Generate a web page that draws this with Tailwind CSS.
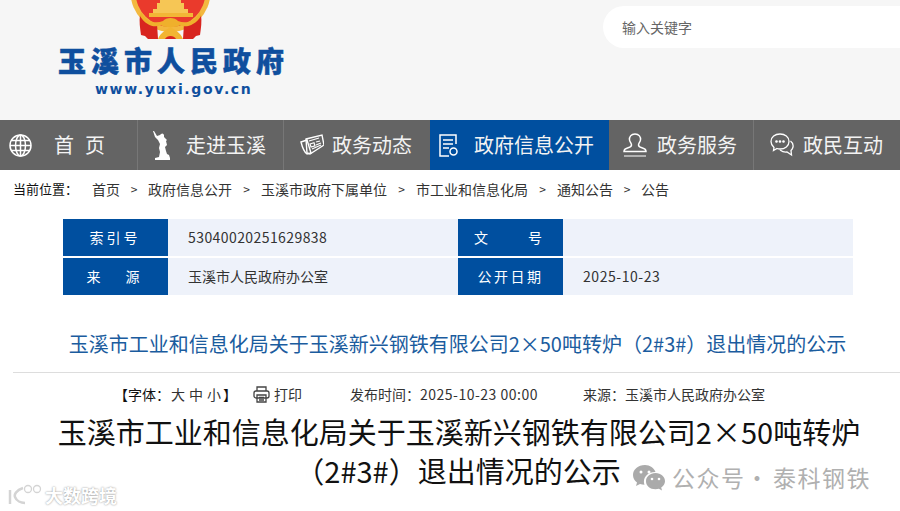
<!doctype html>
<html lang="zh"><head><meta charset="utf-8">
<script src="https://cdn.jsdelivr.net/npm/@tailwindcss/browser@4"></script>
</head>
<body class="w-[900px] h-[511px] overflow-hidden bg-white relative font-['Microsoft_YaHei','Noto_Sans_CJK_SC',sans-serif]">
<header class="h-[120px] bg-[#f6f6f6] relative overflow-hidden">
  <svg class="absolute left-[129px] top-0" width="84" height="40" viewBox="0 0 84 40">
    <circle cx="41.500" cy="-8" r="40" fill="#f3b83f"/>
    <circle cx="41.500" cy="-8" r="35" fill="#ea3a2c"/>
    <path d="M31 0h21v3h3v6h4v6H24V9h4V3h3z" fill="#f6c655"/>
    <path d="M20 13h44v4H20z" fill="#f2b636"/>
    <path d="M11 15 C14 21 20 24 28 24 L29 39 H19 L16 36 L12 35 C11 28 10 21 11 15Z M72 15 C69 21 63 24 55 24 L54 39 H64 L67 36 L71 35 C72 28 73 21 72 15Z" fill="#d8251f"/>
    <path d="M12 12 C18 22 26 24 34 21 C37 17 46 17 49 21 C57 24 65 22 71 12 L72 16 C66 26 56 28 51 25 C48 28 35 28 32 25 C26 28 17 26 11 16Z" fill="#efb02c"/>
    <path d="M29 39 C32 32 37 30 41.500 27 C46 30 51 32 54 39Z" fill="#f2b532"/>
    <path d="M36 39 C38 35 45 35 47 39Z" fill="#d8251f"/>
  </svg>
  <div class="absolute left-[58px] top-[44px] w-[232px] h-[32px] leading-[32px] whitespace-nowrap text-[28px] tracking-[5px] font-black text-[#0f4f9e] [-webkit-text-stroke:0.5px_#0f4f9e]">玉溪市人民政府</div>
  <div class="absolute left-[95px] top-[80px] h-[18px] leading-[18px] whitespace-nowrap text-[14px] tracking-[1.65px] font-bold text-[#0f4f9e] font-['DejaVu_Sans',sans-serif]">www.yuxi.gov.cn</div>
  <div class="absolute left-[603px] top-[6px] w-[320px] h-[42px] rounded-full bg-white flex items-center pl-[19px] text-[14px] text-[#666]">输入关键字</div>
</header>
<nav class="h-[50px] bg-[#646464] flex text-white text-[20px]">
  <a class="w-[138px] flex items-center border-r border-[#777]">
    <svg class="ml-[9px] mr-[22px]" width="23" height="23" viewBox="0 0 23 23" fill="none" stroke="#fff" stroke-width="1.5"><circle cx="11.5" cy="11.5" r="10.5"/><ellipse cx="11.5" cy="11.5" rx="5" ry="10.5"/><path d="M11.5 1v21M1 11.5h21M2.500 6.500h18M2.500 16.500h18"/></svg>
    <span class="flex gap-[11px] whitespace-nowrap text-[#f3f3f3]"><span>首</span><span>页</span></span>
  </a>
  <a class="w-[146px] flex items-center border-r border-[#777]">
    <svg class="ml-[15px] mr-[14px]" width="19" height="29" viewBox="0 0 19 29" fill="#fff"><path d="M0 0l1 0 3 5 3-1 1-1a2 2 0 0 1 3 1l0 2 3 3-1 1 1 4-2 2 1 4 1 3 2 1 1 3v2H2v-2l4-1 1-5-1-4 1-4-2-4-3-3z"/></svg>
    <span class="whitespace-nowrap text-[#f3f3f3]">走进玉溪</span>
  </a>
  <a class="w-[146px] flex items-center">
    <svg class="ml-[16px] mr-[8px]" width="24" height="22" viewBox="0 0 24 22" fill="none" stroke="#fff" stroke-width="1.4"><path d="M6 5L22 1l2 10-14 9-3-1z"/><path d="M1 8l6-2 4 13-4 1C4 18 2 12 1 8z"/><path d="M9 7l10-3M10 10l4-1.200 1 3-4 1.200zM16 8l4-1M16 11l5-2M12 15l9-4" stroke-width="1.200"/></svg>
    <span class="whitespace-nowrap text-[#f3f3f3]">政务动态</span>
  </a>
  <a class="w-[179px] flex items-center bg-[#004f9f]">
    <svg class="ml-[9px] mr-[15px]" width="20" height="23" viewBox="0 0 20 23" fill="none" stroke="#fff" stroke-width="1.5"><path d="M17 10V1H1v21h9"/><path d="M4 6h10M4 10h10M4 14h6"/><circle cx="14.500" cy="17.500" r="3.500"/></svg>
    <span class="whitespace-nowrap text-[#f3f3f3]">政府信息公开</span>
  </a>
  <a class="w-[145px] flex items-center border-r border-[#777]">
    <svg class="ml-[14px] mr-[10px]" width="24" height="24" viewBox="0 0 24 24" fill="none" stroke="#fff" stroke-width="1.500"><path d="M12 1c-4 0-6 3-5.500 6 .3 2 2 3 2 5 0 1.500-2 2.500-4 3-2 .5-3.500 1-3.500 3.500h22c0-2.500-1.500-3-3.500-3.500-2-.5-4-1.500-4-3 0-2 1.700-3 2-5C18 4 16 1 12 1z"/><path d="M1 23h22" stroke="#ccc"/></svg>
    <span class="whitespace-nowrap text-[#f3f3f3]">政务服务</span>
  </a>
  <a class="flex-1 flex items-center">
    <svg class="ml-[16px] mr-[9px]" width="24" height="24" viewBox="0 0 24 24" fill="none" stroke="#fff" stroke-width="1.300"><path d="M10 1C5 1 1 4 1 8.500c0 2.500 1.300 4.500 3 6l-.5 3 3.500-2c1 .3 2 .5 3 .5 5 0 9-3 9-7.500S15 1 10 1z"/><path d="M20.500 8c2 1.500 3 3.500 2.500 6-.3 1.500-1 2.500-2 3.500l.5 4.500-4.500-3c-2.500.5-5-.5-7-2"/><circle cx="6.500" cy="8.500" r=".7" fill="#fff"/><circle cx="10" cy="8.500" r=".7" fill="#fff"/><circle cx="13.500" cy="8.500" r=".7" fill="#fff"/></svg>
    <span class="whitespace-nowrap text-[#f3f3f3]">政民互动</span>
  </a>
</nav>
<div class="h-[38px] flex items-center pl-[13px] text-[14px] text-[#333] whitespace-nowrap">
  <span class="w-[79px] text-[13px] text-[#111]">当前位置：</span>
  <span>首页</span><span class="w-[28px] text-center text-[12px]">&gt;</span>
  <span>政府信息公开</span><span class="w-[29px] text-center text-[12px]">&gt;</span>
  <span>玉溪市政府下属单位</span><span class="w-[29px] text-center text-[12px]">&gt;</span>
  <span>市工业和信息化局</span><span class="w-[29px] text-center text-[12px]">&gt;</span>
  <span>通知公告</span><span class="w-[28px] text-center text-[12px]">&gt;</span>
  <span>公告</span>
</div>
<div class="mt-[11px] ml-[63px] w-[790px] grid grid-cols-[105px_290px_105px_290px] grid-rows-[37px_37px] gap-y-[2px] text-[14px] text-[#333]">
  <div class="bg-[#004f9f] text-white flex items-center justify-center tracking-[3px] pr-[1px]">索引号</div>
  <div class="bg-[#eef2fa] flex items-center pl-[20px] tracking-[0.42px]">53040020251629838</div>
  <div class="bg-[#004f9f] text-white flex items-center justify-center gap-[40px] pr-[5px]"><span>文</span><span>号</span></div>
  <div class="bg-[#eef2fa]"></div>
  <div class="bg-[#004f9f] text-white flex items-center justify-center gap-[25px] pr-[5px]"><span>来</span><span>源</span></div>
  <div class="bg-[#eef2fa] flex items-center pl-[20px]">玉溪市人民政府办公室</div>
  <div class="bg-[#004f9f] text-white flex items-center justify-center tracking-[2.500px]">公开日期</div>
  <div class="bg-[#eef2fa] flex items-center pl-[20px] tracking-[0.55px]">2025-10-23</div>
</div>
<h2 class="mt-[33px] pl-[15px] h-[32px] leading-[32px] text-center text-[20px] text-[#1b5c9e] whitespace-nowrap">玉溪市工业和信息化局关于玉溪新兴钢铁有限公司2×50吨转炉（2#3#）退出情况的公示</h2>
<div class="mt-[12px] ml-[13px] h-px bg-[#ddd]"></div>
<div class="h-[42px] flex items-center text-[14px] text-[#333] whitespace-nowrap pl-[114px]">
  <span class="w-[139px] flex"><span class="text-[#111]">【字体：</span><span class="ml-[1px] flex gap-[4px]"><span>大</span><span>中</span><span>小</span></span><span class="text-[#111] ml-[2px]">】</span></span>
  <svg class="mr-[4px]" width="17" height="17" viewBox="0 0 17 17" fill="none" stroke="#444" stroke-width="1.300"><path d="M4 5V1h9v4"/><rect x="1" y="5" width="15" height="7" rx="2"/><path d="M4 9h9v7H4zM6 11.500h5M6 14h5"/></svg>
  <span class="w-[76px]">打印</span>
  <span class="w-[233px]">发布时间：<span class="tracking-[0.5px]">2025-10-23 00:00</span></span>
  <span>来源：玉溪市人民政府办公室</span>
</div>
<h1 class="w-[918px] flex flex-col items-center text-[29px] leading-[39px] text-[#111] -mt-[3px] font-normal whitespace-nowrap">
  <span>玉溪市工业和信息化局关于玉溪新兴钢铁有限公司2×50吨转炉</span>
  <span class="-ml-[2px]">（2#3#）退出情况的公示</span>
</h1>
<div class="absolute left-[8px] top-[483px] flex items-center text-white text-[18px] font-bold [text-shadow:0_0_2px_#888] h-[24px] whitespace-nowrap">
  <svg class="w-[36px] h-[22px]" viewBox="0 0 36 22" fill="none" stroke="#d4d4d4" stroke-width="2.500"><path d="M2 6v14"/><path d="M15 4C8 6 6 11 7 13c1.500 4 6 6 10 6"/><circle cx="20" cy="5" r="3.500" stroke-width="1.300"/><circle cx="29" cy="5" r="3.500" stroke-width="1.300"/></svg>
  <span class="ml-[1px]">大数跨境</span>
</div>
<div class="absolute left-[632px] top-[460px] flex items-center text-[#b0b0b0] text-[23px] tracking-[1.500px] whitespace-nowrap">
  <svg width="34" height="28" viewBox="0 0 34 26" fill="#aaa"><path d="M13 1C6 1 1 5.500 1 11c0 3 1.500 5.500 4 7.500L4 22l4-2c1.500.5 3 .7 4.500.7-.4-1-.6-2-.6-3 0-5.500 5-9.700 11-9.700h.6C22 4 18 1 13 1z"/><path d="M23.500 9c-5.500 0-9.500 3.700-9.500 8.200s4 8 9.500 8c1.200 0 2.300-.2 3.400-.5l3.100 1.800-.8-3c2.300-1.600 3.800-3.800 3.800-6.300 0-4.500-4-8.200-9.500-8.200z"/><circle cx="9" cy="8" r="1.500" fill="#fff"/><circle cx="17" cy="8" r="1.500" fill="#fff"/><circle cx="20" cy="15" r="1.300" fill="#fff"/><circle cx="27" cy="15" r="1.300" fill="#fff"/></svg>
  <span class="ml-[6px]">公众号</span><span class="mr-[3px]">·</span><span>泰科钢铁</span>
</div>
</body></html>
